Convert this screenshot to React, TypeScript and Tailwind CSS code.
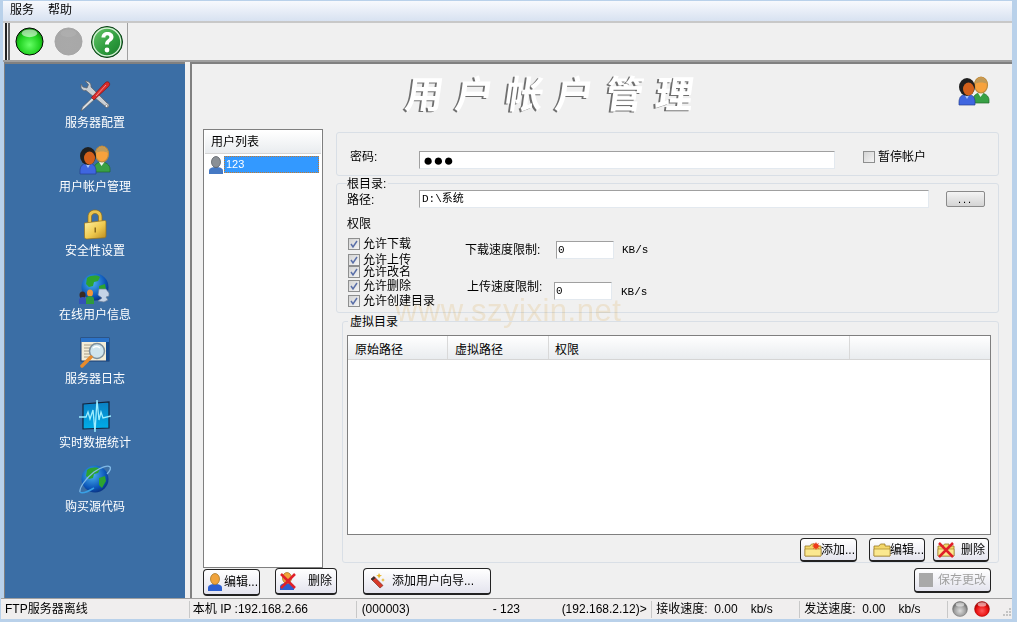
import React from "react";

const FONT = { fontFamily: '"Liberation Sans","Noto Sans CJK SC",sans-serif' };

function Ball({ c1, c2, c3, size = 29, stroke = "#000", hi = 0.55 }: { c1: string; c2: string; c3: string; size?: number; stroke?: string; hi?: number }) {
  const id = "b" + c2.replace("#", "") + size;
  return (
    <svg width={size} height={size} viewBox="0 0 30 30">
      <defs>
        <radialGradient id={id} cx="50%" cy="62%" r="60%">
          <stop offset="0%" stopColor={c1} />
          <stop offset="65%" stopColor={c2} />
          <stop offset="100%" stopColor={c3} />
        </radialGradient>
      </defs>
      <circle cx="15" cy="15" r="14" fill={`url(#${id})`} stroke={stroke} strokeWidth="1" />
      <ellipse cx="15" cy="6.5" rx="8" ry="4" fill="#fff" opacity={hi} />
    </svg>
  );
}

function HelpBall() {
  return (
    <svg width="34" height="34" viewBox="0 0 34 34">
      <defs>
        <linearGradient id="hb" x1="0" y1="0" x2="1" y2="1">
          <stop offset="0%" stopColor="#6fcb6f" />
          <stop offset="55%" stopColor="#2f9e3f" />
          <stop offset="100%" stopColor="#157a28" />
        </linearGradient>
      </defs>
      <circle cx="17" cy="17" r="15.5" fill="url(#hb)" stroke="#0d3a18" strokeWidth="1" />
      <circle cx="17" cy="17" r="13.8" fill="none" stroke="#d9efd9" strokeWidth="1.2" />
      <path d="M11.5 12.5c0-3.5 2.5-5.5 6-5.5s6 2 6 5c0 2.4-1.5 3.5-3 4.6-1.2.9-1.6 1.6-1.6 3H15c0-2.6.8-3.7 2.4-4.9 1.2-.9 2-1.500 2-2.600 0-1.100-.8-1.900-2-1.900-1.300 0-2 .9-2 2.300z" fill="#fff" />
      <circle cx="17" cy="25" r="2.400" fill="#fff" />
    </svg>
  );
}

function ToolsIcon() {
  return (
    <svg width="32" height="32" viewBox="0 0 32 32">
      <path d="M2 8c1 2 3 3 5 2.500L27 27c1 1 3 .5 3-1.500 0-1.500-1-2-2-2.500L12 7c.5-3-1.500-6-6-6l3.500 3.500L8 8 4 7 2 4z" fill="#c9ced3" stroke="#5f666e" strokeWidth="0.8" />
      <circle cx="27.500" cy="26" r="1.300" fill="#fff" stroke="#555" strokeWidth="0.5" />
      <path d="M2 31l1.500-4L15 16l2 2L5 29z" fill="#d8dce0" stroke="#555" strokeWidth="0.6" />
      <path d="M15 20l-2.500-2.500L26 3c1.500-1.500 3-1.500 4-.5s.8 2.800-.5 4z" fill="#d92b2b" stroke="#7d1212" strokeWidth="0.7" />
      <path d="M17 16L27 5" stroke="#f58a8a" strokeWidth="1" />
    </svg>
  );
}

function UsersIcon({ size = 32 }: { size?: number }) {
  return (
    <svg width={size} height={size} viewBox="0 0 32 32">
      <path d="M15 25c0-4 3-7 7.500-7s8.500 3 8.500 7v3H15z" fill="#38a045" stroke="#1f6b2a" strokeWidth="0.7" />
      <path d="M20 18l2.500 4 3-4z" fill="#eef5ee" />
      <ellipse cx="23" cy="10" rx="6.500" ry="8" fill="#f7a23d" stroke="#b98a40" strokeWidth="1.200" />
      <path d="M17 9c1-5 3.500-6 6-6s5 1 6 6c-3-2-9-2-12 0z" fill="#c09a58" />
      <path d="M1 27c0-5 3-8 8-8s8 3 8 8v3H1z" fill="#3f66e0" stroke="#26408f" strokeWidth="0.7" />
      <path d="M6 19l3 5 3-5z" fill="#a9c4f5" />
      <ellipse cx="9" cy="12" rx="8" ry="9" fill="#1f1f1f" />
      <ellipse cx="10.500" cy="14" rx="5.500" ry="6.500" fill="#d2601b" />
    </svg>
  );
}

function LockIcon() {
  return (
    <svg width="32" height="32" viewBox="0 0 32 32">
      <defs>
        <linearGradient id="lk" x1="0" y1="0" x2="1" y2="1">
          <stop offset="0%" stopColor="#fff3a6" />
          <stop offset="55%" stopColor="#eec94e" />
          <stop offset="100%" stopColor="#b98a1e" />
        </linearGradient>
      </defs>
      <path d="M9 15V9c0-4.500 3-7 7-7s7 2.500 7 7v6h-3.500V9c0-2.300-1.500-3.500-3.500-3.500S12.500 6.700 12.500 9v6z" fill="#e9c44f" stroke="#8f6c17" strokeWidth="0.7" />
      <path d="M5.500 15l20-2.500c1 0 1.500.5 1.500 1.500v14c0 1-.5 1.500-1.500 1.800L8 31c-1.500 0-2.500-.5-2.500-2z" fill="url(#lk)" stroke="#94701c" strokeWidth="0.7" />
      <path d="M15.500 19.500h1.500v5h-1.500z" fill="#8a6a1b" />
    </svg>
  );
}

function GlobeBase({ id }: { id: string }) {
  return (
    <>
      <defs>
        <radialGradient id={id} cx="40%" cy="35%" r="70%">
          <stop offset="0%" stopColor="#4bb4f0" />
          <stop offset="70%" stopColor="#0c55b8" />
          <stop offset="100%" stopColor="#0a2f7c" />
        </radialGradient>
      </defs>
      <circle cx="16" cy="15" r="13.500" fill={`url(#${id})`} />
      <path d="M8 6c4-3 10-3 13-1l-2 4-4 1-1 4-4 1-3-3zM20 14l6-2 1 5-4 7-3-3z" fill="#2da32f" />
    </>
  );
}

function NetIcon() {
  return (
    <svg width="32" height="32" viewBox="0 0 32 32">
      <GlobeBase id="g1" />
      <path d="M20 17h7l3 4v3l-3 1 2 3-4 2-6-1 4-3-4-3z" fill="#c5d3e6" stroke="#6d7f9b" strokeWidth="0.7" />
      <ellipse cx="3.500" cy="23" rx="3" ry="3.500" fill="#3a2a22" />
      <path d="M0 32v-4c0-2 2-3 4-3s3 1 3 3v4z" fill="#3452b8" />
      <ellipse cx="11" cy="21" rx="3" ry="3.500" fill="#f0963a" />
      <path d="M7 32v-5c0-2 2-3 4-3s4 1 4 3v5z" fill="#2f9a3f" />
    </svg>
  );
}

function LogIcon() {
  return (
    <svg width="32" height="32" viewBox="0 0 32 32">
      <rect x="2" y="2" width="28" height="23" fill="#f3ecd7" stroke="#1c3d6e" strokeWidth="1" />
      <rect x="2" y="2" width="28" height="4" fill="#2b72c8" />
      <rect x="27" y="6" width="3" height="19" fill="#174a8c" />
      <path d="M5 9h12M5 12h8M5 15h7M5 18h7M5 21h9" stroke="#a89d86" strokeWidth="1" />
      <circle cx="18" cy="15" r="7.500" fill="#cfe4ee" stroke="#7e8f9c" strokeWidth="1.500" />
      <path d="M14 12c2-2 5-2 7 0" stroke="#fff" strokeWidth="1.500" fill="none" />
      <path d="M12 21L3 30" stroke="#e78b2d" strokeWidth="3.500" strokeLinecap="round" />
    </svg>
  );
}

function PulseIcon() {
  return (
    <svg width="32" height="32" viewBox="0 0 32 32">
      <defs>
        <linearGradient id="pl" x1="0" y1="0" x2="0" y2="1">
          <stop offset="0%" stopColor="#0b7fc4" />
          <stop offset="100%" stopColor="#00aee8" />
        </linearGradient>
      </defs>
      <path d="M4 4l26-2v26l-26 1z" fill="url(#pl)" stroke="#13233c" strokeWidth="1.200" />
      <path d="M0 17h7l2-5 2 7 3-9 2 22 2-32 2 20 2-8 2 6 8-2" fill="none" stroke="#9eeeff" strokeWidth="1.300" />
    </svg>
  );
}

function IeIcon() {
  return (
    <svg width="32" height="32" viewBox="0 0 32 32">
      <GlobeBase id="g2" />
      <path d="M1 28c-1-4 6-14 14-20 7-5 14-7 16-5 1 1 0 4-3 7" fill="none" stroke="#7fb8e6" strokeWidth="1.300" />
      <path d="M1 28c2 2 9-1 14-4" fill="none" stroke="#39a0e6" strokeWidth="1.500" />
    </svg>
  );
}

function Btn({ w, h = 27, children }: { w: string; h?: number; children: React.ReactNode }) {
  return (
    <div
      className={`${w} flex items-center overflow-hidden whitespace-nowrap rounded-[4px] border border-[#222] border-b-2 bg-gradient-to-b from-white to-[#e4e4ee] text-[12px] text-black`}
      style={{ height: h }}
    >
      {children}
    </div>
  );
}

function PersonSmall({ gray = false }: { gray?: boolean }) {
  return (
    <svg width="16" height="18" viewBox="0 0 16 18" className="shrink-0">
      <path d="M1 18v-3c0-3 3-4 7-4s7 1 7 4v3z" fill={gray ? "#4579c4" : "#2d5fd0"} />
      <ellipse cx="8" cy="6" rx="4.500" ry="5.500" fill={gray ? "#8a9096" : "#f0a33c"} stroke={gray ? "#5b6167" : "#a87a2b"} strokeWidth="0.8" />
    </svg>
  );
}

function RedX() {
  return (
    <svg width="18" height="18" viewBox="0 0 18 18" className="absolute left-0 top-0">
      <path d="M2 2l14 14M16 2L2 16" stroke="#e0202a" strokeWidth="2.500" />
    </svg>
  );
}

function Folder({ star = false }: { star?: boolean }) {
  return (
    <svg width="18" height="18" viewBox="0 0 18 18" className="shrink-0">
      <path d="M1 15V5h5l1.500-2H12v2h5v10z" fill="#f3d76b" stroke="#9a7a22" strokeWidth="0.8" />
      <path d="M1 8h16v7H1z" fill="#fbe88f" stroke="#9a7a22" strokeWidth="0.6" />
      {star && <path d="M12 1l1 2 2-1-1 2 2 1-2 1 1 2-2-1-1 2-1-2-2 1 1-2-2-1 2-1-1-2 2 1z" fill="#ee3a1b" />}
    </svg>
  );
}

function Check({ on = true }: { on?: boolean }) {
  return (
    <div className="flex h-[12px] w-[12px] shrink-0 items-center justify-center border border-[#8e8f8f] bg-gradient-to-br from-[#d4d4d4] to-[#f4f4f4]">
      {on && (
        <svg width="10" height="10" viewBox="0 0 10 10">
          <path d="M2 5l2 3 4-6" fill="none" stroke="#5a6fa8" strokeWidth="1.500" />
        </svg>
      )}
    </div>
  );
}

const sideItems: [React.ReactNode, string][] = [
  [<ToolsIcon />, "服务器配置"],
  [<UsersIcon />, "用户帐户管理"],
  [<LockIcon />, "安全性设置"],
  [<NetIcon />, "在线用户信息"],
  [<LogIcon />, "服务器日志"],
  [<PulseIcon />, "实时数据统计"],
  [<IeIcon />, "购买源代码"],
];

function Perm({ text, mt }: { text: string; mt: string }) {
  return (
    <div className={`flex h-[14px] items-center gap-[3px] ${mt}`}>
      <Check />
      <span className="whitespace-nowrap text-[12px] leading-[14px] text-black">{text}</span>
    </div>
  );
}

export default function App() {
  return (
    <div className="flex h-[622px] w-[1017px] flex-col overflow-hidden bg-[#b9d1ea] pt-[1px]" style={FONT}>
      <div className="ml-[3px] mr-[5px] flex h-[20px] items-center gap-[14px] bg-gradient-to-b from-[#f7f9fd] to-[#d8e2f1] pb-[2px] pl-[7px] text-[12px] text-black">
        <span>服务</span>
        <span>帮助</span>
      </div>
      <div className="ml-[3px] mr-[5px] flex h-[41px] shrink-0 border-y-2 border-t-[#c8c8c8] border-b-[#a0a0a0] bg-[#f0f0f0]">
        <div className="flex w-[125px] items-center border-r border-[#a0a0a0]">
          <div className="ml-[2px] h-full w-[2px] bg-[#222]" />
          <div className="ml-[1px] h-full w-[2px] bg-[#666]" />
          <div className="ml-[5px] flex items-center">
            <Ball c1="#66ff66" c2="#1fd11f" c3="#0f8a0f" />
            <div className="ml-[10px]">
              <Ball c1="#a9a9a9" c2="#a8a8a8" c3="#a6a6a6" stroke="#a6a6a6" hi={0.08} />
            </div>
            <div className="ml-[7px]">
              <HelpBall />
            </div>
          </div>
        </div>
      </div>

      <div className="ml-[4px] mr-[5px] flex h-[536px] shrink-0 bg-[#f0f0f0]">
        <div className="flex w-[181px] shrink-0 flex-col items-center border-l border-t-2 border-[#808080] bg-[#3b6ea5] pt-[16px]">
          {sideItems.map(([icon, label]) => (
            <div key={label} className="flex h-[64px] w-full flex-col items-center">
              <div className="h-[32px] w-[32px]">{icon}</div>
              <div className="mt-[3px] text-[12px] leading-[16px] text-white">{label}</div>
            </div>
          ))}
        </div>

        <div className="ml-[5px] flex min-w-0 flex-1 flex-col border-l-2 border-t-2 border-[#808080]">
          <div className="relative flex h-[65px] shrink-0">
            <div className="ml-[213px] mt-[6px] -skew-x-[8deg] whitespace-nowrap text-[38px] font-bold leading-[50px] tracking-[12px] text-white [text-shadow:-2px_1px_0_#6f6f6f]">
              用户帐户管理
            </div>
            <div className="absolute right-[22px] top-[11px]">
              <UsersIcon size={32} />
            </div>
          </div>

          <div className="flex flex-1">
            <div className="ml-[11px] flex w-[134px] shrink-0 flex-col">
              <div className="h-[439px] w-[120px] shrink-0 border border-[#7f7f7f] bg-white p-[1px]">
                <div className="flex h-[23px] items-center border-b border-[#d5d5d5] bg-gradient-to-b from-white to-[#e9ecef] pl-[6px] text-[12px] text-black">
                  用户列表
                </div>
                <div className="mt-[2px] flex h-[17px] items-center pl-[3px]">
                  <PersonSmall gray />
                  <div className="h-full w-[95px] border border-dotted border-[#c47a2c] bg-[#3399ff] pl-[1px] text-[11px] leading-[15px] text-white">
                    123
                  </div>
                </div>
              </div>
              <div className="mt-[1px] flex">
                <Btn w="w-[57px]">
                  <span className="ml-[3px]"><PersonSmall /></span>
                  <span className="ml-[1px]">编辑...</span>
                </Btn>
              </div>
            </div>

            <div className="flex min-w-0 flex-1 flex-col">
              <div className="ml-[-1px] mt-[3px] flex h-[44px] w-[663px] items-center rounded-[3px] border border-[#d9dfe6] pt-[12px]">
                <span className="-mt-[6px] ml-[13px] w-[69px] text-[12px] text-black">密码:</span>
                <div className="flex h-[18px] w-[416px] items-center border border-[#e3e9ef] border-l-[#a0a0a0] border-t-[#a0a0a0] bg-white pl-[3px] text-[17px] leading-none text-black">
                  ●●●
                </div>
                <div className="-mt-[6px] ml-[28px] flex items-center gap-[3px]">
                  <Check on={false} />
                  <span className="text-[12px] text-black">暂停帐户</span>
                </div>
              </div>

              <div className="relative ml-[-1px] mt-[7px] h-[130px] w-[663px] rounded-[3px] border border-[#d9dfe6]">
                <span className="absolute left-[10px] top-[-7px] bg-[#f0f0f0] pr-[2px] text-[12px] leading-[14px] text-black">根目录:</span>
                <div className="ml-[10px] mt-[6px] flex items-center">
                  <span className="mt-[2px] w-[72px] text-[12px] leading-[16px] text-black">路径:</span>
                  <div className="h-[18px] w-[510px] border border-[#e3e9ef] border-l-[#a0a0a0] border-t-[#a0a0a0] bg-white pl-[2px] font-['Liberation_Mono','Noto_Sans_CJK_SC',monospace] text-[11px] leading-[16px] text-black">
                    {"D:\\系统"}
                  </div>
                  <div className="ml-[17px] flex h-[16px] w-[39px] items-center justify-center rounded-[2px] border border-[#8a8a8a] bg-gradient-to-b from-[#f4f4f4] to-[#d4d4d4] text-[11px] tracking-[2px] text-black">
                    ...
                  </div>
                </div>
                <div className="ml-[10px] mt-[8px] text-[12px] leading-[16px] text-black">权限</div>
                <div className="flex">
                  <div className="ml-[11px] mt-[5px] flex w-[117px] flex-col">
                    <Perm text="允许下载" mt="mt-[0px]" />
                    <Perm text="允许上传" mt="mt-[2px]" />
                    <Perm text="允许改名" mt="mt-[-2px]" />
                    <Perm text="允许删除" mt="mt-[0px]" />
                    <Perm text="允许创建目录" mt="mt-[1px]" />
                  </div>
                  <div className="flex flex-col">
                    <div className="mt-[9px] flex items-center">
                      <span className="w-[91px] text-[12px] leading-[18px] text-black">下载速度限制:</span>
                      <div className="h-[18px] w-[58px] border border-[#e3e9ef] border-l-[#a0a0a0] border-t-[#a0a0a0] bg-white pl-[1px] font-['Liberation_Mono',monospace] text-[11px] leading-[17px] text-black">0</div>
                      <span className="ml-[8px] font-['Liberation_Mono',monospace] text-[11px] text-black">KB/s</span>
                    </div>
                    <div className="ml-[2px] mt-[23px] flex items-start">
                      <span className="w-[87px] text-[12px] leading-[10px] text-black">上传速度限制:</span>
                      <div className="h-[18px] w-[58px] border border-[#e3e9ef] border-l-[#a0a0a0] border-t-[#a0a0a0] bg-white pl-[1px] font-['Liberation_Mono',monospace] text-[11px] leading-[17px] text-black">0</div>
                      <span className="ml-[9px] mt-[3px] font-['Liberation_Mono',monospace] text-[11px] leading-[14px] text-black">KB/s</span>
                    </div>
                  </div>
                </div>
                <div className="pointer-events-none absolute left-[58px] top-[112px] whitespace-nowrap text-[31px] leading-[30px] tracking-[0.5px] text-[#fbf1dd] mix-blend-multiply">
                  www.szyixin.net
                </div>
              </div>

              <div className="relative ml-[5px] mt-[8px] h-[242px] w-[657px] rounded-[3px] border border-[#d9dfe6] px-[4px] pt-[13px]">
                <span className="absolute left-[5px] top-[-7px] bg-[#f0f0f0] px-[2px] text-[12px] leading-[14px] text-black">虚拟目录</span>
                <div className="h-[200px] w-[644px] border border-[#7f7f7f] bg-white">
                  <div className="flex h-[24px] border-b border-[#d5d5d5] bg-gradient-to-b from-white to-[#e9ecef] text-[12px] leading-[28px] text-black">
                    <div className="w-[100px] border-r border-[#d9d9d9] pl-[7px]">原始路径</div>
                    <div className="w-[101px] border-r border-[#d9d9d9] pl-[7px]">虚拟路径</div>
                    <div className="w-[301px] border-r border-[#d9d9d9] pl-[6px]">权限</div>
                  </div>
                </div>
                <div className="mt-[3px] flex justify-end pr-[5px]">
                  <Btn w="w-[57px]" h={24}>
                    <span className="ml-[3px]"><Folder star /></span>
                    <span className="-ml-[1px]">添加...</span>
                  </Btn>
                  <div className="ml-[12px]">
                    <Btn w="w-[56px]" h={24}>
                      <span className="ml-[3px]"><Folder /></span>
                      <span className="-ml-[1px]">编辑...</span>
                    </Btn>
                  </div>
                  <div className="ml-[8px]">
                    <Btn w="w-[56px]" h={24}>
                      <span className="relative ml-[3px] block h-[18px] w-[18px]"><Folder /><RedX /></span>
                      <span className="ml-[6px]">删除</span>
                    </Btn>
                  </div>
                </div>
              </div>

              <div className="ml-[-133px] mt-[5px] flex items-start">
                <div className="ml-[71px]">
                  <Btn w="w-[62px]">
                    <span className="relative ml-[3px] block h-[18px] w-[18px]"><PersonSmall /><RedX /></span>
                    <span className="ml-[11px]">删除</span>
                  </Btn>
                </div>
                <div className="ml-[26px]">
                  <Btn w="w-[128px]">
                    <svg width="18" height="18" viewBox="0 0 18 18" className="ml-[4px] shrink-0">
                      <path d="M3 7l9 9 3-2.500-9-9z" fill="#d83a2a" stroke="#6e2018" strokeWidth="0.600" />
                      <path d="M3 7l3-2.500 1.500 1.500-3 2.500z" fill="#333" />
                      <path d="M11 1l1 2 2 .5-2 1-1 2-.8-2-2-1 2-.5z" fill="#e8b21f" />
                      <path d="M15 6l.6 1.400 1.400.6-1.400.6-.6 1.400-.6-1.400-1.400-.6 1.400-.6z" fill="#e8b21f" />
                    </svg>
                    <span className="ml-[6px]">添加用户向导...</span>
                  </Btn>
                </div>
                <div className="ml-[423px]">
                  <div className="flex h-[25px] w-[77px] items-center overflow-hidden rounded-[4px] border border-b-2 border-[#222] bg-gradient-to-b from-white to-[#e4e4ee] text-[12px] text-[#a0a0a0]">
                    <div className="ml-[4px] h-[14px] w-[14px] bg-[#a9a9a9]" />
                    <span className="ml-[5px]">保存更改</span>
                  </div>
                </div>
              </div>
            </div>
          </div>
        </div>
      </div>

      <div className="ml-[1px] mr-[5px] flex h-[21px] shrink-0 items-center border-t border-[#a0a0a0] bg-[#f0eeee] text-[12px] text-black">
        <div className="w-[188px] pl-[4px]">FTP服务器离线</div>
        <div className="h-[17px] w-[167px] border-l border-[#c8c8c8] pl-[3px] leading-[17px]">本机 IP :192.168.2.66</div>
        <div className="flex h-[17px] w-[296px] items-center border-l border-[#c8c8c8] pl-[5px]">
          <span className="w-[131px]">(000003)</span>
          <span className="w-[69px]">- 123</span>
          <span className="whitespace-nowrap">(192.168.2.12)&gt;</span>
        </div>
        <div className="flex h-[17px] w-[148px] items-center border-l border-[#c8c8c8] pl-[4px]">
          <span className="whitespace-pre">接收速度:  0.00</span>
          <span className="ml-[13px]">kb/s</span>
        </div>
        <div className="flex h-[17px] w-[148px] items-center border-l border-[#c8c8c8] pl-[4px]">
          <span className="whitespace-pre">发送速度:  0.00</span>
          <span className="ml-[13px]">kb/s</span>
        </div>
        <div className="flex h-[17px] items-center gap-[6px] border-l border-[#c8c8c8] pl-[4px]">
          <Ball c1="#dddddd" c2="#9a9a9a" c3="#555555" size={16} stroke="#777" />
          <Ball c1="#ff5a5a" c2="#e80f0f" c3="#8a0000" size={16} stroke="#a00" />
          <svg width="10" height="10" viewBox="0 0 10 10" className="ml-[6px] mt-[6px]">
            <path d="M7 1h2v2H7zM4 4h2v2H4zM7 4h2v2H7zM1 7h2v2H1zM4 7h2v2H4zM7 7h2v2H7z" fill="#c4c4c4" />
          </svg>
        </div>
      </div>
    </div>
  );
}
